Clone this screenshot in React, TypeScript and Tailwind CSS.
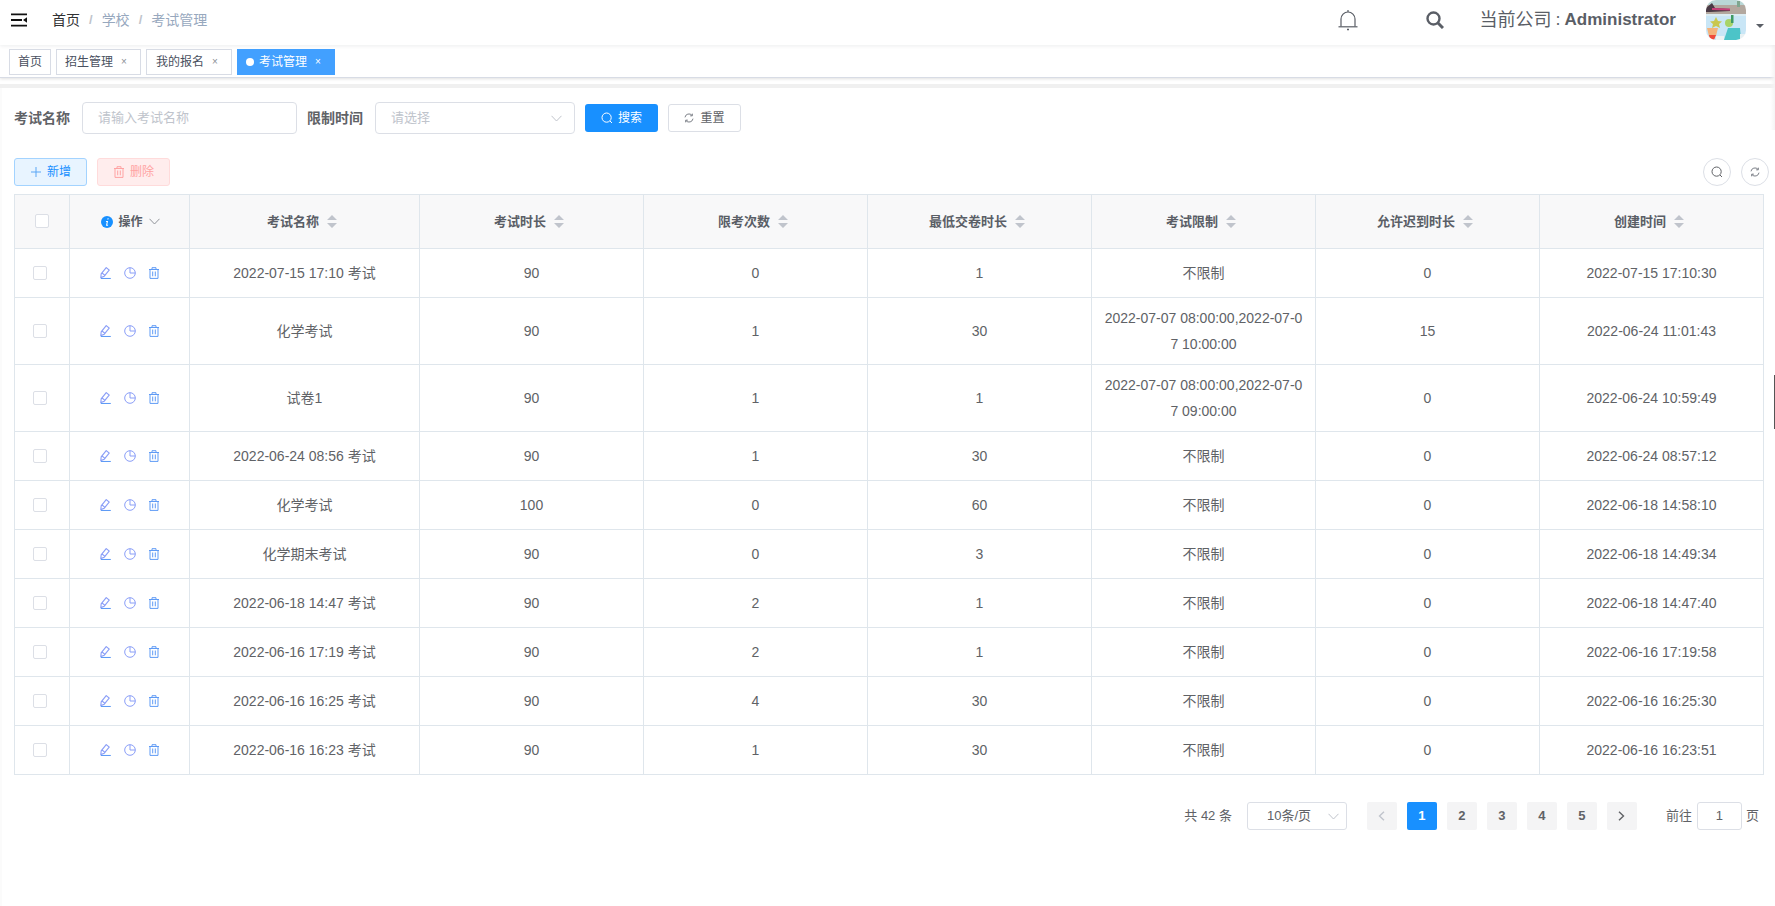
import React from "react";

const CJK = "font-['Liberation_Sans','Noto_Sans_CJK_SC',sans-serif]";

type Row = { name: string; dur: string; times: string; min: string; limit: string; late: string; created: string; tall?: boolean };

const rows: Row[] = [
  { name: "2022-07-15 17:10 考试", dur: "90", times: "0", min: "1", limit: "不限制", late: "0", created: "2022-07-15 17:10:30" },
  { name: "化学考试", dur: "90", times: "1", min: "30", limit: "2022-07-07 08:00:00,2022-07-07 10:00:00", late: "15", created: "2022-06-24 11:01:43", tall: true },
  { name: "试卷1", dur: "90", times: "1", min: "1", limit: "2022-07-07 08:00:00,2022-07-07 09:00:00", late: "0", created: "2022-06-24 10:59:49", tall: true },
  { name: "2022-06-24 08:56 考试", dur: "90", times: "1", min: "30", limit: "不限制", late: "0", created: "2022-06-24 08:57:12" },
  { name: "化学考试", dur: "100", times: "0", min: "60", limit: "不限制", late: "0", created: "2022-06-18 14:58:10" },
  { name: "化学期末考试", dur: "90", times: "0", min: "3", limit: "不限制", late: "0", created: "2022-06-18 14:49:34" },
  { name: "2022-06-18 14:47 考试", dur: "90", times: "2", min: "1", limit: "不限制", late: "0", created: "2022-06-18 14:47:40" },
  { name: "2022-06-16 17:19 考试", dur: "90", times: "2", min: "1", limit: "不限制", late: "0", created: "2022-06-16 17:19:58" },
  { name: "2022-06-16 16:25 考试", dur: "90", times: "4", min: "30", limit: "不限制", late: "0", created: "2022-06-16 16:25:30" },
  { name: "2022-06-16 16:23 考试", dur: "90", times: "1", min: "30", limit: "不限制", late: "0", created: "2022-06-16 16:23:51" },
];

const Carets = () => (
  <svg width="10" height="13" viewBox="0 0 10 13" className="ml-2 shrink-0">
    <path d="M5 0 L10 5 L0 5 Z M0 8 L10 8 L5 13 Z" fill="#c0c4cc" />
  </svg>
);

const Chevron = ({ c = "#c0c4cc", w = 11 }: { c?: string; w?: number }) => (
  <svg width={w} height="7" viewBox="0 0 11 7" fill="none">
    <path d="M0.5 0.8 L5.5 6 L10.5 0.8" stroke={c} strokeWidth="1" />
  </svg>
);

const SearchIcon = ({ c, s = 12 }: { c: string; s?: number }) => (
  <svg width={s} height={s} viewBox="0 0 12 12" fill="none">
    <circle cx="5.6" cy="5.6" r="4.6" stroke={c} strokeWidth="1" />
    <path d="M9 9 L11 11" stroke={c} strokeWidth="1" />
  </svg>
);

const RefreshIcon = ({ c = "#7b7f87" }: { c?: string }) => (
  <svg width="10" height="10" viewBox="0 0 12 12" fill="none">
    <path d="M1.2 5.2 A4.8 4.8 0 0 1 9.6 2.8" stroke={c} strokeWidth="1.2" />
    <path d="M10.8 6.8 A4.8 4.8 0 0 1 2.4 9.2" stroke={c} strokeWidth="1.2" />
    <path d="M10 0.8 V3.4 H7.4 M2 11.2 V8.6 H4.6" stroke={c} strokeWidth="1.2" />
  </svg>
);

const TrashIcon = ({ c, s = 12 }: { c: string; s?: number }) => (
  <svg width={s} height={s} viewBox="0 0 12 12" fill="none" stroke={c} strokeWidth="1">
    <path d="M1 2.5 H11 M4 2.5 V0.7 H8 V2.5 M2 2.5 V11.4 H10 V2.5 M4.7 4.5 V9.3 M7.3 4.5 V9.3" />
  </svg>
);

const EditIcon = () => (
  <svg width="12" height="12" viewBox="0 0 12 12" fill="none" stroke="#8a9ef7" strokeWidth="1.1">
    <path d="M0.8 10.6 L1.2 6.8 L6.2 0.6 L9.2 3 L4.2 9.2 Z" />
    <path d="M2 6 L5 8.4" />
    <path d="M1 11.5 H10.8" stroke="#5f9bf5" />
  </svg>
);

const PieIcon = () => (
  <svg width="12" height="12" viewBox="0 0 12 12" fill="none" stroke="#8a9ef7" strokeWidth="1">
    <circle cx="6" cy="6" r="5.3" />
    <path d="M6 0.7 V6 H11.3" />
  </svg>
);

const Avatar = () => (
  <div className="w-10 h-10 rounded-[10px] overflow-hidden shrink-0">
    <svg width="40" height="40" viewBox="0 0 40 40" className="blur-[0.5px]">
      <rect width="40" height="40" fill="#c9e6f6" />
      <rect width="40" height="6" fill="#b9d7d6" />
      <rect y="5" width="40" height="9" fill="#b3a89f" />
      <path d="M0 8 L6 3 L9 8 L24 9 L24 11 L4 12 L0 12 Z" fill="#4a3a45" />
      <path d="M6 8 L24 8.5 L24 10.5 L6 10 Z" fill="#c9417a" />
      <rect x="31" y="1" width="3" height="6" fill="#7fa68f" />
      <rect y="14" width="40" height="2" fill="#dcecf2" />
      <path d="M10 17 L12 21 L16 21.5 L13 24 L14 28 L10 26 L6 28 L7 24 L4 21.5 L8 21 Z" fill="#c9c74e" />
      <circle cx="23" cy="23" r="4" fill="#a8d468" />
      <rect x="25" y="15" width="2.5" height="8" fill="#3f9a63" />
      <path d="M1 28 H12 L10 36 H3 Z" fill="#f4b27a" />
      <path d="M3 35 H10 L8 40 H4 Z" fill="#ee4a3a" />
      <path d="M18 40 L22 28 H34 L35 40 Z" fill="#4cc4c8" />
      <rect x="34" y="34" width="6" height="6" fill="#e8f1f3" />
      <rect x="10" y="36" width="8" height="4" fill="#eef3f3" />
    </svg>
  </div>
);

const th = "border-r border-b border-[#dfe6ec] bg-[#f8f8f9] text-[13px] font-bold text-[#5a5e66] text-center p-0";
const td = "border-r border-b border-[#dfe6ec] text-sm text-[#606266] text-center p-0";

const Head = ({ t }: { t: string }) => (
  <th className={th}>
    <div className="flex items-center justify-center pr-[5px]">
      <span>{t}</span>
      <Carets />
    </div>
  </th>
);

const Page = ({ n, active }: { n: React.ReactNode; active?: boolean }) => (
  <span className={active ? "w-[30px] h-7 rounded-[2px] bg-[#1890ff] text-white text-[13px] font-bold flex items-center justify-center" : "w-[30px] h-7 rounded-[2px] bg-[#f4f4f5] text-[#606266] text-[13px] font-bold flex items-center justify-center"}>
    {n}
  </span>
);

export default function App() {
  return (
    <div className={`relative w-[1775px] h-[906px] overflow-hidden bg-white ${CJK}`}>
      {/* top bar */}
      <header className="relative z-10 h-[45px] flex items-center px-[11px] pb-[5px] bg-white shadow-[0_1px_4px_rgba(0,21,41,0.08)]">
        <svg width="16" height="14" viewBox="0 0 16 14" className="shrink-0">
          <path d="M0 0.4 H16 V2.2 H0 Z M0 6 H11 V8 H0 Z M0 11.8 H16 V13.6 H0 Z" fill="#111" />
          <path d="M16 4.2 L12 7 L16 9.8 Z" fill="#111" />
        </svg>
        <nav className="ml-[25px] flex items-center text-sm text-[#97a8be]">
          <span className="text-[#303133]">首页</span>
          <span className="mx-[9px] text-[#c0c4cc] font-bold text-[13px]">/</span>
          <span>学校</span>
          <span className="mx-[9px] text-[#c0c4cc] font-bold text-[13px]">/</span>
          <span>考试管理</span>
        </nav>
        <div className="ml-auto flex items-center">
          <svg width="20" height="21" viewBox="0 0 20 21" fill="none" stroke="#5a5e66" strokeWidth="1.2">
            <path d="M3 16.5 V9 A7 7 0 0 1 17 9 V16.5" />
            <path d="M0.5 16.8 H19.5" />
            <path d="M10 0 V2" />
            <path d="M9 19.5 H11" strokeWidth="1.6" />
          </svg>
          <svg width="18" height="18" viewBox="0 0 18 18" fill="none" stroke="#5a5e66" className="ml-[68px]">
            <circle cx="7.5" cy="7.5" r="6" strokeWidth="2.4" />
            <path d="M12 12 L17 17" strokeWidth="3" />
          </svg>
          <span className="ml-9 flex items-center text-[#5a5e66] whitespace-nowrap">
            <span className="text-lg">当前公司</span>
            <span className="w-[13px] text-center text-[13px] font-['Noto_Sans_CJK_TC',sans-serif]">：</span>
            <b className="text-[17px] font-bold">Administrator</b>
          </span>
          <span className="ml-[30px]">
            <Avatar />
          </span>
          <svg width="8" height="4" viewBox="0 0 8 4" className="ml-[10px] mt-[12px]">
            <path d="M0 0 H8 L4 4 Z" fill="#5a5e66" />
          </svg>
        </div>
      </header>

      {/* tags */}
      <div className="h-[33px] pt-1 pl-[9px] flex gap-[5px] items-start border-b border-[#d8dce5] shadow-[0_1px_3px_0_rgba(0,0,0,0.12)] text-xs text-[#495060]">
        <span className="h-[26px] w-[42px] flex items-center justify-center border border-[#d8dce5] bg-white">首页</span>
        <span className="h-[26px] w-[85px] flex items-center pl-2 border border-[#d8dce5] bg-white">
          招生管理<span className="ml-2 text-[10px] text-[#8c8f96]">×</span>
        </span>
        <span className="h-[26px] w-[86px] flex items-center pl-[9px] border border-[#d8dce5] bg-white">
          我的报名<span className="ml-2 text-[10px] text-[#8c8f96]">×</span>
        </span>
        <span className="h-[26px] w-[98px] flex items-center pl-[9px] bg-[#42a0ff] text-white">
          <span className="w-2 h-2 rounded-full bg-white mr-[5px]" />
          考试管理<span className="ml-2 text-[10px]">×</span>
        </span>
      </div>
      <div className="h-[6px]" />
      <div className="h-1 bg-[#f0f0f0]" />

      {/* filter */}
      <div className="mt-[14px] pl-[14px] flex items-center h-8">
        <label className="w-[56px] text-sm font-bold text-[#606266]">考试名称</label>
        <div className="ml-3 w-[215px] h-8 border border-[#dcdfe6] rounded-[4px] pl-[15px] flex items-center text-[13px] text-[#c0c4cc]">请输入考试名称</div>
        <label className="ml-[10px] w-[56px] text-sm font-bold text-[#606266]">限制时间</label>
        <div className="ml-3 w-[200px] h-8 border border-[#dcdfe6] rounded-[4px] pl-[15px] pr-3 flex items-center justify-between text-[13px] text-[#c0c4cc]">
          请选择
          <Chevron />
        </div>
        <button className="ml-[10px] w-[73px] h-7 rounded-[3px] bg-[#1890ff] text-white text-xs flex items-center justify-center gap-[5px]">
          <SearchIcon c="#fff" />
          搜索
        </button>
        <button className="ml-[10px] w-[73px] h-7 rounded-[3px] bg-white border border-[#dcdfe6] text-[#606266] text-xs flex items-center justify-center gap-[6px]">
          <RefreshIcon />
          重置
        </button>
      </div>

      {/* toolbar */}
      <div className="mt-6 pl-[14px] pr-[6px] flex items-center h-7">
        <button className="w-[73px] h-7 rounded-[3px] bg-[#e8f4ff] border border-[#a3d3ff] text-[#1890ff] text-xs flex items-center justify-center gap-[5px]">
          <svg width="12" height="12" viewBox="0 0 12 12" fill="none" stroke="#5aa6f5" strokeWidth="1">
            <path d="M6 1 V11 M1 6 H11" />
          </svg>
          新增
        </button>
        <button className="ml-[10px] w-[73px] h-7 rounded-[3px] bg-[#ffeded] border border-[#ffdbdb] text-[#ffa3a3] text-xs flex items-center justify-center gap-[5px]">
          <TrashIcon c="#ffa3a3" />
          删除
        </button>
        <button className="ml-auto w-7 h-7 rounded-full border border-[#dcdfe6] flex items-center justify-center">
          <SearchIcon c="#606266" />
        </button>
        <button className="ml-[10px] w-7 h-7 rounded-full border border-[#dcdfe6] flex items-center justify-center">
          <RefreshIcon />
        </button>
      </div>

      {/* table */}
      <div className="mt-2 ml-[14px] w-[1750px]">
        <table className="table-fixed w-[1750px] border-separate border-spacing-0 border-t border-l border-[#dfe6ec]">
          <colgroup>
            <col className="w-[55px]" />
            <col className="w-[120px]" />
            <col className="w-[230px]" />
            <col className="w-[224px]" />
            <col className="w-[224px]" />
            <col className="w-[224px]" />
            <col className="w-[224px]" />
            <col className="w-[224px]" />
            <col className="w-[224px]" />
          </colgroup>
          <thead>
            <tr className="h-[54px]">
              <th className={th}>
                <div className="flex items-center justify-center pb-px">
                  <span className="w-[14px] h-[14px] border border-[#dcdfe6] rounded-[2px] bg-white" />
                </div>
              </th>
              <th className={th}>
                <div className="flex items-center justify-center text-xs pl-[2px]">
                  <svg width="12" height="12" viewBox="0 0 12 12" className="mr-[5px] shrink-0">
                    <circle cx="6" cy="6" r="6" fill="#1890ff" />
                    <path d="M6.6 2.2 H7.7 L7.4 3.5 H6.3 Z M5.1 5 H7.1 L6.2 8.8 H7.2 L7 9.8 H4.9 L5.8 6 H4.9 Z" fill="#fff" />
                  </svg>
                  <span>操作</span>
                  <span className="ml-[6px] flex">
                    <Chevron c="#909399" />
                  </span>
                </div>
              </th>
              <Head t="考试名称" />
              <Head t="考试时长" />
              <Head t="限考次数" />
              <Head t="最低交卷时长" />
              <Head t="考试限制" />
              <Head t="允许迟到时长" />
              <Head t="创建时间" />
            </tr>
          </thead>
          <tbody>
            {rows.map((r, i) => (
              <tr key={i} className={r.tall ? "h-[67px]" : "h-[49px]"}>
                <td className={td}>
                  <div className="flex items-center justify-center pr-1 pb-px">
                    <span className="w-[14px] h-[14px] border border-[#dcdfe6] rounded-[2px] bg-white" />
                  </div>
                </td>
                <td className={td}>
                  <div className="flex items-center justify-center gap-3">
                    <EditIcon />
                    <PieIcon />
                    <TrashIcon c="#5f9bf5" />
                  </div>
                </td>
                <td className={td}>{r.name}</td>
                <td className={td}>{r.dur}</td>
                <td className={td}>{r.times}</td>
                <td className={td}>{r.min}</td>
                <td className={`${td} px-[10px] break-all leading-[26px]`}>{r.limit}</td>
                <td className={td}>{r.late}</td>
                <td className={td}>{r.created}</td>
              </tr>
            ))}
          </tbody>
        </table>
      </div>

      {/* pagination */}
      <div className="mt-[27px] pr-4 flex items-center justify-end h-7 text-[13px] text-[#606266]">
        <span className="mr-[15px] whitespace-pre">共 42 条</span>
        <div className="w-[100px] h-7 border border-[#dcdfe6] rounded-[3px] pl-[19px] pr-[7px] flex items-center justify-between">
          10条/页
          <Chevron />
        </div>
        <div className="ml-5 flex gap-[10px]">
          <Page
            n={
              <svg width="7" height="10" viewBox="0 0 7 10" fill="none" stroke="#c0c4cc" strokeWidth="1.4">
                <path d="M6 0.7 L1.5 5 L6 9.3" />
              </svg>
            }
          />
          <Page n="1" active />
          <Page n="2" />
          <Page n="3" />
          <Page n="4" />
          <Page n="5" />
          <Page
            n={
              <svg width="7" height="10" viewBox="0 0 7 10" fill="none" stroke="#606266" strokeWidth="1.4">
                <path d="M1 0.7 L5.5 5 L1 9.3" />
              </svg>
            }
          />
        </div>
        <span className="ml-[29px]">前往</span>
        <div className="ml-[5px] w-[45px] h-7 border border-[#dcdfe6] rounded-[3px] flex items-center justify-center">1</div>
        <span className="ml-[4px]">页</span>
      </div>

      {/* page edge details */}
      <div className="absolute right-0 top-[375px] w-px h-[54px] bg-[#555]" />
      <div className="absolute right-0 top-[45px] w-[5px] h-[85px] bg-gradient-to-r from-transparent to-[#f4f4f4]" />
      <div className="absolute left-0 top-[88px] bottom-0 w-[2px] bg-[#fbfbfb]" />
    </div>
  );
}
